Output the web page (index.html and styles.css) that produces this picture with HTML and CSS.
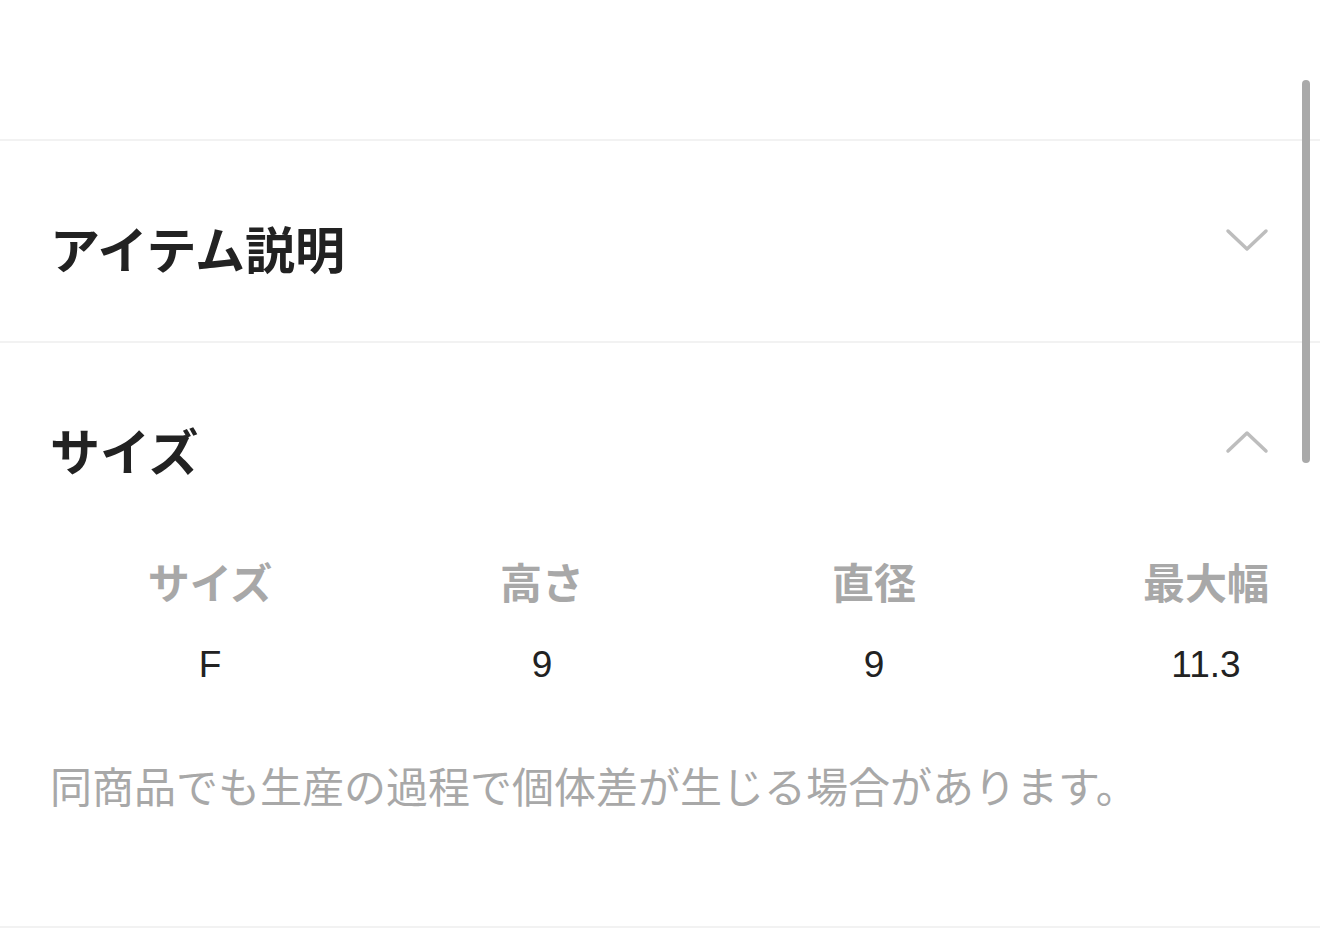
FILE: index.html
```html
<!DOCTYPE html>
<html lang="ja">
<head>
  <meta charset="UTF-8" />
  <title>アイテム詳細</title>
  <link rel="stylesheet" href="styles.css">
</head>
<body>
  <div class="page">
    <div class="top-space"></div>

    <section class="panel">
      <div class="panel-head">
        <h2>アイテム説明</h2>
        <svg class="chevron" width="44" height="28" viewBox="0 0 44 28">
          <polyline points="3,4 22,22 41,4" />
        </svg>
      </div>
    </section>

    <section class="panel">
      <div class="panel-head">
        <h2>サイズ</h2>
        <svg class="chevron up" width="44" height="28" viewBox="0 0 44 28">
          <polyline points="3,22 22,4 41,22" />
        </svg>
      </div>
      <div class="size-table">
        <div class="th">サイズ</div>
        <div class="th">高さ</div>
        <div class="th">直径</div>
        <div class="th">最大幅</div>
        <div class="td">F</div>
        <div class="td">9</div>
        <div class="td">9</div>
        <div class="td">11.3</div>
      </div>
      <p class="note">同商品でも生産の過程で個体差が生じる場合があります。</p>
    </section>
  </div>

  <div class="scrollbar"></div>
</body>
</html>
```

FILE: styles.css
```css
body {
  margin: 0;
  background: #ffffff;
  font-family: "Liberation Sans", "Noto Sans CJK JP", sans-serif;
  color: #222222;
  overflow: hidden;
}

.page {
  width: 1320px;
}

.top-space {
  height: 139px;
}

.panel {
  border-top: 2px solid #f2f2f2;
  padding: 0 50px;
}

.panel:last-child {
  border-bottom: 2px solid #f2f2f2;
}

.panel-head {
  height: 200px;
  display: flex;
  align-items: center;
  justify-content: space-between;
}

.panel-head h2 {
  margin: 0;
  padding-top: 12px;
  font-family: "Noto Sans CJK JP", sans-serif;
  font-size: 50px;
  font-weight: 700;
  color: #222222;
  line-height: 1;
}

.chevron {
  margin-right: 1px;
}

.chevron polyline {
  fill: none;
  stroke: #bdbdbd;
  stroke-width: 3.5;
  stroke-linecap: round;
  stroke-linejoin: round;
}

.size-table {
  display: grid;
  grid-template-columns: repeat(4, 332px);
  margin: 16px 0 0 -6px;
  row-gap: 40px;
  justify-items: center;
  align-items: center;
}

.th {
  font-family: "Noto Sans CJK JP", sans-serif;
  font-size: 42px;
  font-weight: 700;
  color: #a8a8a8;
  line-height: 44px;
}

.td {
  font-size: 37px;
  color: #222222;
  line-height: 44px;
}

.note {
  margin: 0;
  padding: 76px 0 119px;
  font-family: "Noto Sans CJK JP", sans-serif;
  font-size: 42px;
  color: #a8a8a8;
  line-height: 44px;
}

.scrollbar {
  position: fixed;
  top: 80px;
  right: 10px;
  width: 8px;
  height: 383px;
  border-radius: 4px;
  background: #a9a9a9;
}
```
